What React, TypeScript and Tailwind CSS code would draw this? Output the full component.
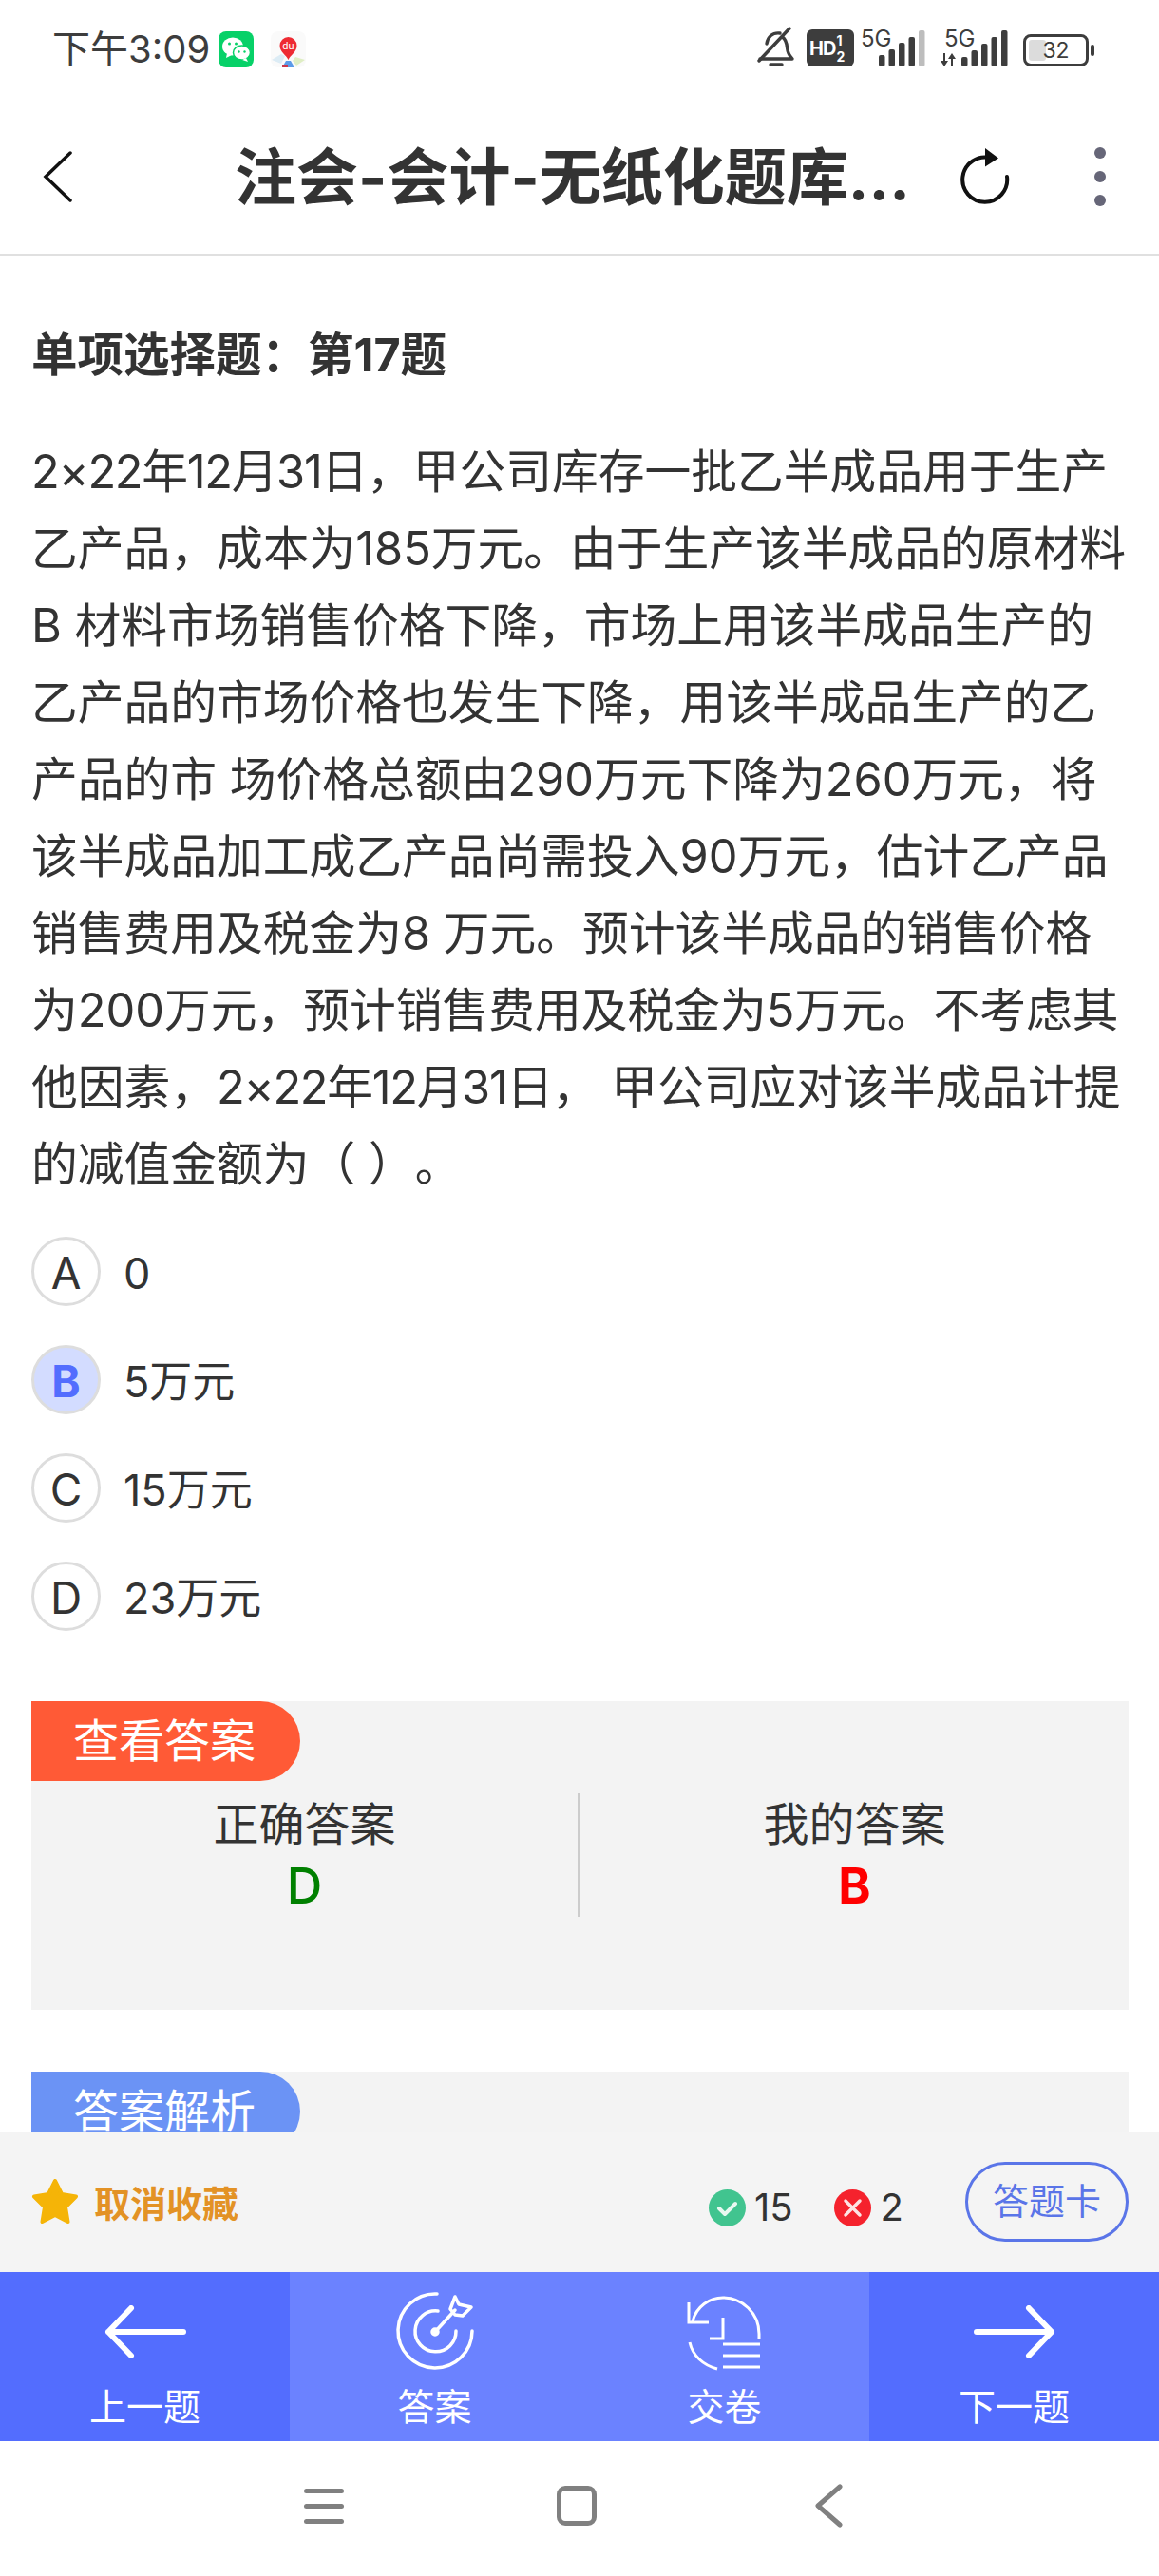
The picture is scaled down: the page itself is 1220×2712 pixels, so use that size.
import React from "react"

const DATE = "2×22年12月31日"

const lines = [
  "2×22年12月31日，甲公司库存一批乙半成品用于生产",
  "乙产品，成本为185万元。由于生产该半成品的原材料",
  "B 材料市场销售价格下降，市场上用该半成品生产的",
  "乙产品的市场价格也发生下降，用该半成品生产的乙",
  "产品的市 场价格总额由290万元下降为260万元，将",
  "该半成品加工成乙产品尚需投入90万元，估计乙产品",
  "销售费用及税金为8 万元。预计该半成品的销售价格",
  "为200万元，预计销售费用及税金为5万元。不考虑其",
  "他因素，2×22年12月31日， 甲公司应对该半成品计提",
  "的减值金额为（ ）。",
]

const options = [
  { key: "A", text: "0" },
  { key: "B", text: "5万元", picked: true },
  { key: "C", text: "15万元" },
  { key: "D", text: "23万元" },
]

function QuestionLine({ line }: { line: string }) {
  const at = line.indexOf(DATE)
  if (at < 0) return <div>{line}</div>
  return (
    <div>
      {line.slice(0, at)}
      <span className="tracking-[-1.300px]">{DATE}</span>
      {line.slice(at + DATE.length)}
    </div>
  )
}

function Signal({ dim }: { dim?: boolean }) {
  const bars = [10, 17, 24, 31, 38]
  return (
    <svg width="50" height="38" viewBox="0 0 50 38">
      {bars.map((h, i) => (
        <rect
          key={i}
          x={i * 10.5}
          y={38 - h}
          width="6.5"
          height={h}
          rx="2"
          fill={dim && i === 4 ? "#bdbdbd" : "#3d3d3d"}
        />
      ))}
    </svg>
  )
}

function StatusBar() {
  return (
    <div className="h-[72px] pt-[30px] pl-[55px] pr-[68px] flex justify-between items-start text-[#3d3d3d]">
      <div className="flex items-center">
        <span className="text-[40px] leading-[44px] whitespace-nowrap w-[175px]">下午3:09</span>
        <svg width="37" height="38" viewBox="0 0 37 38">
          <rect width="37" height="38" rx="8" fill="#07d168" />
          <ellipse cx="15" cy="16" rx="11" ry="9.5" fill="#fff" />
          <path d="M9 23l-1 5 6-3z" fill="#fff" />
          <ellipse cx="24.5" cy="22.5" rx="9" ry="7.5" fill="#fff" stroke="#07d168" strokeWidth="1.5" />
          <path d="M29 28l2 4-6-2z" fill="#fff" />
          <circle cx="11.5" cy="13" r="1.5" fill="#07d168" />
          <circle cx="18.5" cy="13" r="1.5" fill="#07d168" />
          <circle cx="21.5" cy="21.5" r="1.2" fill="#07d168" />
          <circle cx="27.5" cy="21.5" r="1.2" fill="#07d168" />
        </svg>
        <svg width="37" height="38" viewBox="0 0 37 38" className="ml-[18px]">
          <rect width="37" height="38" rx="8" fill="#fafafa" />
          <path d="M1 30l10-6 4 2-4 8z" fill="#dcecf5" />
          <path d="M36 30l-10-3-3 4 4 5z" fill="#dfeec4" />
          <path d="M12 38l4-7h5l4 7z" fill="#5b9be8" />
          <path d="M12 35h6v3h-6z" fill="#c9384b" />
          <path d="M18.5 30c-2-5-9-8-9-15a9 9 0 0 1 18 0c0 7-7 10-9 15z" fill="#ee2b33" />
          <text x="18.5" y="19" fontSize="11" fill="#fff" textAnchor="middle" fontFamily="Roboto, sans-serif">du</text>
        </svg>
      </div>
      <div className="flex items-end h-[40px]">
        <svg width="40" height="42" viewBox="0 0 40 42" fill="none" stroke="#3d3d3d" strokeWidth="3.4" strokeLinecap="round" strokeLinejoin="round">
          <path d="M3 34h34c-4-4-5-7-5.5-12-.6-6-2-9-5-11M24 7c-8-1-13 4-14 11" />
          <path d="M2 36L34 2" />
          <path d="M14 40h12" />
        </svg>
        <div className="ml-[12px] w-[50px] h-[39px] rounded-[6px] bg-[#3d3d3d] text-white flex items-center pl-[3px] leading-none">
          <span className="text-[20px] font-bold tracking-[-1px]">HD</span>
          <span className="flex flex-col text-[14px] font-bold leading-[17px] ml-[1px]">
            <span>1</span>
            <span>2</span>
          </span>
        </div>
        <div className="relative ml-[7px] w-[69px] h-[40px] flex justify-end items-end">
          <span className="absolute left-0 top-[-2px] text-[24px] leading-[26px]">5G</span>
          <svg width="50" height="38" viewBox="0 0 50 38">
            {[12, 18, 25, 31, 38].map((h, i) => (
              <rect key={i} x={i * 10.5} y={38 - h} width="6.5" height={h} rx="2" fill={i === 4 ? "#bdbdbd" : "#3d3d3d"} />
            ))}
          </svg>
        </div>
        <div className="relative ml-[15px] w-[72px] h-[40px] flex justify-end items-end">
          <span className="absolute left-[4px] top-[-2px] text-[24px] leading-[26px]">5G</span>
          <svg width="20" height="14" viewBox="0 0 20 14" className="absolute left-0 bottom-0" fill="#3d3d3d">
            <path d="M3 0h2v8h3l-4 6-4-6h3zM11 14h2V6h3l-4-6-4 6h3z" />
          </svg>
          <Signal />
        </div>
        <div className="ml-[15px] flex items-center">
          <div className="relative w-[69px] h-[34px] border-[3px] border-[#3d3d3d] rounded-[8px] p-[3px] flex">
            <div className="w-[32%] h-full bg-[#dcdcdc] rounded-[3px]"></div>
            <span className="absolute inset-0 flex items-center justify-center text-[23px] leading-none">32</span>
          </div>
          <div className="ml-[2px] w-[4px] h-[12px] bg-[#3d3d3d] rounded-[2px]"></div>
        </div>
      </div>
    </div>
  )
}

function Header() {
  return (
    <div className="h-[198px] border-b-[3px] border-[#e0e0e0] flex items-center relative pt-[33px]">
      <svg width="32" height="54" viewBox="0 0 32 54" fill="none" stroke="#111" strokeWidth="3.5" strokeLinecap="round" className="ml-[45px]">
        <path d="M29 2L3 27l26 25" />
      </svg>
      <div className="ml-[170px] w-[710px] text-[65px] font-bold text-[#333] leading-none whitespace-nowrap">
        注会-会计-无纸化题库...
      </div>
      <svg width="52" height="60" viewBox="0 0 52 60" fill="none" className="ml-[54px]">
        <path d="M32 10.5A23.5 23.5 0 1 0 49 30" stroke="#111" strokeWidth="4" strokeLinecap="round" />
        <path d="M26 0l14 10.5-14 9z" fill="#111" />
      </svg>
      <div className="ml-[89px] flex flex-col gap-[13px]">
        <span className="w-[12px] h-[12px] rounded-full bg-[#666678]"></span>
        <span className="w-[12px] h-[12px] rounded-full bg-[#666678]"></span>
        <span className="w-[12px] h-[12px] rounded-full bg-[#666678]"></span>
      </div>
    </div>
  )
}

function AnswerCard() {
  return (
    <div className="ml-[33px] mr-[32px] mt-[74px] h-[325px] bg-[#f3f3f3]">
      <div className="w-[283px] h-[84px] bg-[#ff5a36] rounded-r-[42px] text-white text-[48px] leading-[84px] pl-[44px]">查看答案</div>
      <div className="flex h-[130px] mt-[13px]">
        <div className="w-[575px] flex flex-col items-center">
          <div className="text-[48px] leading-[60px] mt-[3px] text-[#333]">正确答案</div>
          <div className="text-[52px] leading-[62px] mt-[4px] font-medium text-[#008000]">D</div>
        </div>
        <div className="w-[3px] h-full bg-[#cccccc]"></div>
        <div className="flex-1 flex flex-col items-center">
          <div className="text-[48px] leading-[60px] mt-[3px] text-[#333]">我的答案</div>
          <div className="text-[52px] leading-[62px] mt-[4px] font-bold text-[#ff0000]">B</div>
        </div>
      </div>
    </div>
  )
}

function ToolBar() {
  return (
    <div className="h-[147px] bg-[#f4f4f4] flex items-center pl-[33px] pr-[32px]">
      <svg width="50" height="48" viewBox="0 0 50 48" className="shrink-0 mb-[2px]">
        <path
          d="M25 2l7 14 15 2.500-11 11 2.500 15.500-13.500-7-13.500 7L14 29.500 3 18.500 18 16z"
          fill="#f5b407"
          stroke="#f5b407"
          strokeWidth="4"
          strokeLinejoin="round"
        />
      </svg>
      <span className="ml-[16px] mt-[3px] text-[38px] font-bold text-[#e39225] whitespace-nowrap">取消收藏</span>
      <div className="ml-auto flex items-center mt-[11px]">
        <svg width="39" height="39" viewBox="0 0 39 39">
          <circle cx="19.500" cy="19.500" r="19.500" fill="#41c48f" />
          <path d="M11 20l6 6 11-11" fill="none" stroke="#e8f8f0" strokeWidth="4" strokeLinecap="round" strokeLinejoin="round" />
        </svg>
        <span className="ml-[9px] text-[40px] text-[#333] leading-none">15</span>
        <svg width="39" height="39" viewBox="0 0 39 39" className="ml-[43px]">
          <circle cx="19.500" cy="19.500" r="19.500" fill="#f5222d" />
          <path d="M12 12l15 15M27 12L12 27" fill="none" stroke="#fde3e3" strokeWidth="3.500" strokeLinecap="round" />
        </svg>
        <span className="ml-[10px] text-[40px] text-[#333] leading-none">2</span>
      </div>
      <div className="ml-[65px] mb-[2px] w-[172px] h-[84px] border-[3px] border-[#5a75e8] rounded-full text-[#5a75e8] text-[38px] flex items-center justify-center">答题卡</div>
    </div>
  )
}

function NavBar() {
  return (
    <div className="h-[178px] flex text-white text-[39px] leading-[46px]">
      <div className="w-[305px] bg-[#536dfe] flex flex-col items-center">
        <svg width="86" height="56" viewBox="0 0 86 56" fill="none" stroke="#fff" strokeWidth="6" strokeLinecap="round" strokeLinejoin="round" className="mt-[35px]">
          <path d="M83 28H4M28 3L4 28l24 25" />
        </svg>
        <span className="mt-[28px]">上一题</span>
      </div>
      <div className="w-[305px] bg-[#6b82ff] flex flex-col items-center">
        <svg width="86" height="86" viewBox="0 0 86 86" fill="none" stroke="#fff" strokeWidth="3.500" strokeLinecap="round" strokeLinejoin="round" className="mt-[19px]">
          <path d="M45 4a39 39 0 1 0 37 39" />
          <path d="M46 22a21.500 21.500 0 1 0 19 21" />
          <circle cx="43" cy="44" r="3" fill="#fff" />
          <path d="M43 44l21-23" />
          <path d="M59 20l5-13 4 8 13 3-9 9-8-1z" />
        </svg>
        <span className="mt-[14px]">答案</span>
      </div>
      <div className="w-[305px] bg-[#6b82ff] flex flex-col items-center">
        <svg width="80" height="80" viewBox="0 0 80 80" fill="none" stroke="#fff" strokeWidth="3" className="mt-[24px]">
          <path d="M6 28C10 12 24 3 38 3c20 0 38 16 38 38v5" />
          <path d="M2 8v21h21" />
          <path d="M38 24v22H24" />
          <path d="M3 50c3 14 14 24 29 28" />
          <path d="M38 52h39M38 64h39M38 76h39" />
        </svg>
        <span className="mt-[15px]">交卷</span>
      </div>
      <div className="w-[305px] bg-[#536dfe] flex flex-col items-center">
        <svg width="86" height="56" viewBox="0 0 86 56" fill="none" stroke="#fff" strokeWidth="6" strokeLinecap="round" strokeLinejoin="round" className="mt-[35px]">
          <path d="M3 28h79M58 3l24 25-24 25" />
        </svg>
        <span className="mt-[28px]">下一题</span>
      </div>
    </div>
  )
}

function SystemNav() {
  return (
    <div className="flex-1 bg-white relative flex items-center pb-[6px]">
      <div className="ml-[320px] w-[42px] flex flex-col gap-[11px]">
        <span className="h-[5px] rounded-full bg-[#808080]"></span>
        <span className="h-[5px] rounded-full bg-[#808080]"></span>
        <span className="h-[5px] rounded-full bg-[#808080]"></span>
      </div>
      <div className="ml-[224px] w-[42px] h-[42px] border-[5px] border-[#808080] rounded-[9px]"></div>
      <svg width="30" height="46" viewBox="0 0 30 46" fill="none" stroke="#808080" strokeWidth="5" strokeLinecap="round" strokeLinejoin="round" className="ml-[229px]">
        <path d="M27 3L4 23l23 20" />
      </svg>
    </div>
  )
}

export default function App() {
  return (
    <div className="w-[1220px] h-[2712px] bg-white flex flex-col font-['Inter','Noto_Sans_CJK_SC',sans-serif] overflow-hidden">
      <StatusBar />
      <Header />
      <div className="h-[1975px] overflow-hidden shrink-0">
        <div className="pl-[33px] pt-[76px] text-[48.500px] leading-[56px] font-bold text-[#333]">单项选择题：第17题</div>
        <div className="pl-[33px] mt-[54px] text-[48.750px] leading-[81px] text-[#333] whitespace-nowrap [text-spacing-trim:space-all]">
          {lines.map((line) => (
            <QuestionLine key={line} line={line} />
          ))}
        </div>
        <div className="pl-[33px] mt-[36px] flex flex-col gap-[41px]">
          {options.map((o) => (
            <div key={o.key} className="flex items-center h-[73px]">
              {o.picked ? (
                <div className="w-[73px] h-[73px] pt-[4px] rounded-full border-[3px] border-[#dddddd] bg-[#d3dcff] text-[#536dfe] text-[46px] font-bold flex items-center justify-center">{o.key}</div>
              ) : (
                <div className="w-[73px] h-[73px] pt-[4px] rounded-full border-[3px] border-[#dddddd] text-[#333] text-[46px] flex items-center justify-center">{o.key}</div>
              )}
              <span className="ml-[24px] mt-[5px] text-[45px] text-[#333]">{o.text}</span>
            </div>
          ))}
        </div>
        <AnswerCard />
        <div className="ml-[33px] mr-[32px] mt-[65px] h-[200px] bg-[#f3f3f3]">
          <div className="w-[283px] h-[84px] bg-[#6b93f5] rounded-r-[42px] text-white text-[48px] leading-[84px] pl-[44px]">答案解析</div>
        </div>
      </div>
      <ToolBar />
      <NavBar />
      <SystemNav />
    </div>
  )
}
